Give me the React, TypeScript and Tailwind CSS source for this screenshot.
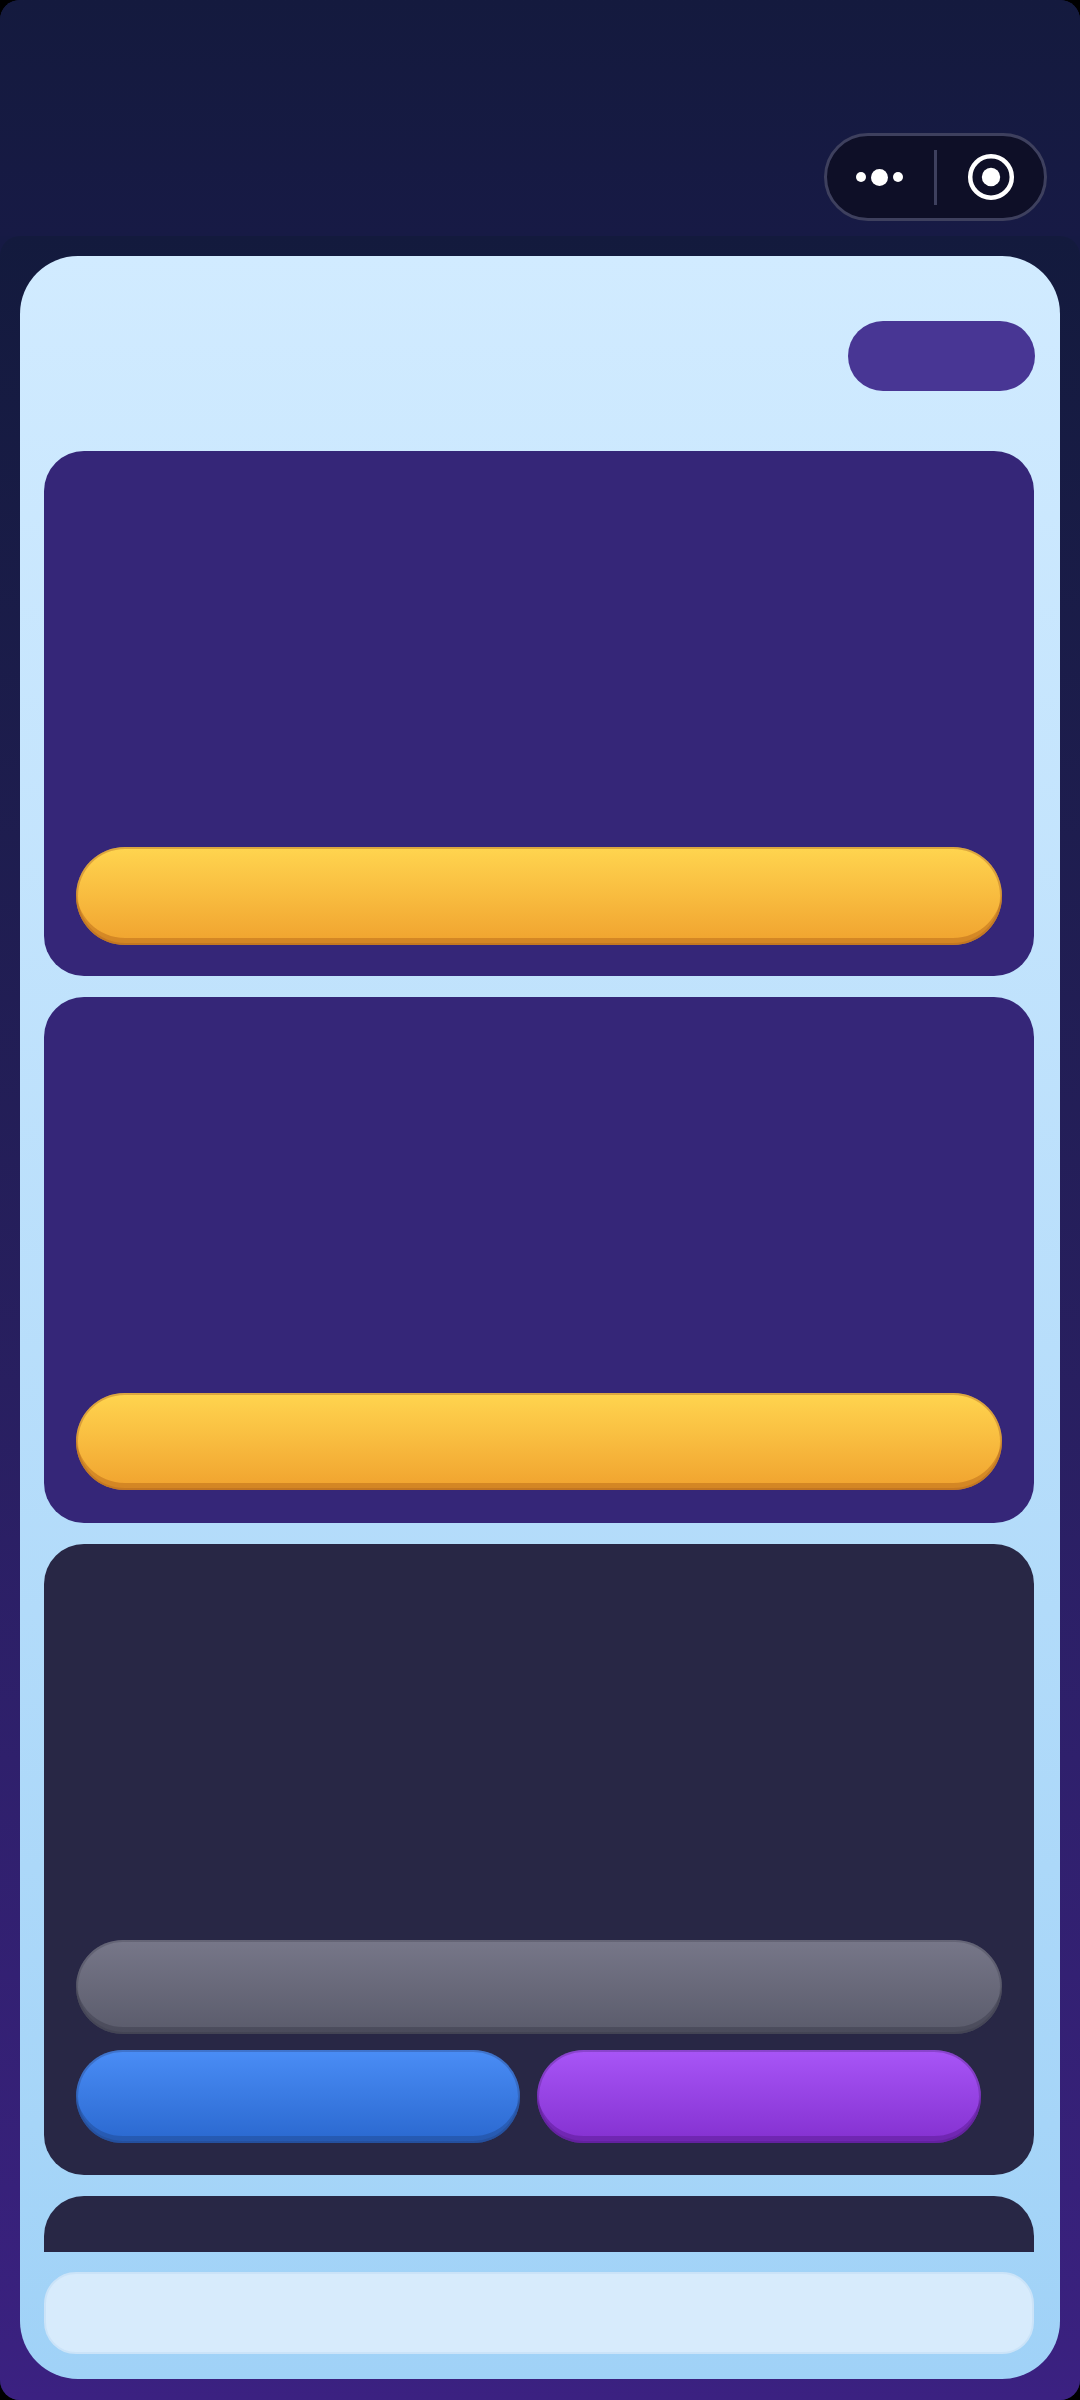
import React from 'react';

const GoldButton = ({ className = '' }: { className?: string }) => (
  <div className={`w-full rounded-full bg-gradient-to-b from-[#ffd54f] to-[#f0a22e] shadow-[inset_0_-7px_0_rgba(170,90,20,0.4),inset_0_0_0_2px_rgba(170,100,40,0.4)] ${className}`} />
);

const App = () => {
  return (
    <div className="h-[2400px] w-[1080px] bg-black">
      <div className="flex h-full flex-col overflow-hidden rounded-[20px] bg-[#161a44]">
        {/* top bar with capsule */}
        <div className="flex h-[236px] shrink-0 justify-end bg-gradient-to-b from-[#141a3e] to-[#171a45] pr-[33px] pt-[133px]">
          <div className="flex h-[88px] w-[223px] items-center rounded-full border-[3px] border-[#3e405e] bg-[#0e0f27]">
            <div className="flex w-[107px] items-center justify-end gap-[5px] pr-[31px]">
              <span className="h-[10px] w-[10px] rounded-full bg-white" />
              <span className="h-[17px] w-[17px] rounded-full bg-white" />
              <span className="h-[10px] w-[10px] rounded-full bg-white" />
            </div>
            <div className="h-[55px] w-[3px] bg-[#3e405e]" />
            <div className="flex flex-1 justify-center pl-[1px]">
              <svg width="48" height="48" viewBox="0 0 48 48">
                <circle cx="24" cy="24" r="20.8" fill="none" stroke="#fff" strokeWidth="4.5" />
                <circle cx="24" cy="24" r="9.2" fill="#fff" />
              </svg>
            </div>
          </div>
        </div>

        {/* main area */}
        <div className="flex-1 rounded-t-[20px] bg-gradient-to-b from-[#131a3d] to-[#3b2181] px-[20px] pt-[20px]">
          <div className="h-[2123px] rounded-[58px] bg-gradient-to-b from-[#d1ebff] to-[#a0d2f7] pl-[24px] pr-[26px] pt-[65px]">
            <div className="flex justify-end">
              <div className="h-[70px] w-[187px] translate-x-[1px] rounded-full bg-[#483694]" />
            </div>

            <div className="mt-[60px] flex h-[1801px] flex-col gap-[21px] overflow-hidden">
              <div className="flex h-[525px] shrink-0 flex-col justify-end rounded-[40px] bg-[#352678] px-[32px] pb-[31px]">
                <GoldButton className="h-[98px]" />
              </div>
              <div className="flex h-[526px] shrink-0 flex-col justify-end rounded-[40px] bg-[#352678] px-[32px] pb-[33px]">
                <GoldButton className="h-[97px]" />
              </div>
              <div className="flex h-[631px] shrink-0 flex-col justify-end gap-[16px] rounded-[40px] bg-[#282745] px-[32px] pb-[32px]">
                <div className="h-[94px] rounded-full bg-gradient-to-b from-[#777789] to-[#5a5b6b] shadow-[inset_0_-7px_0_rgba(40,40,55,0.3),inset_0_0_0_2px_rgba(60,60,75,0.3)]" />
                <div className="flex gap-[17px]">
                  <div className="h-[93px] w-[444px] rounded-full bg-gradient-to-b from-[#4a8df6] to-[#2a68cf] shadow-[inset_0_-7px_0_rgba(30,60,120,0.35),inset_0_0_0_2px_rgba(40,60,110,0.3)]" />
                  <div className="h-[93px] w-[444px] rounded-full bg-gradient-to-b from-[#a855f7] to-[#8430d0] shadow-[inset_0_-7px_0_rgba(80,20,130,0.4),inset_0_0_0_2px_rgba(70,30,110,0.3)]" />
                </div>
              </div>
              <div className="h-[120px] shrink-0 rounded-t-[40px] bg-[#282745]" />
            </div>

            <div className="mt-[20px] h-[82px] rounded-[32px] border-2 border-[#cbe3f8] bg-[#d7ebfc]" />
          </div>
        </div>
      </div>
    </div>
  );
};

export default App;
